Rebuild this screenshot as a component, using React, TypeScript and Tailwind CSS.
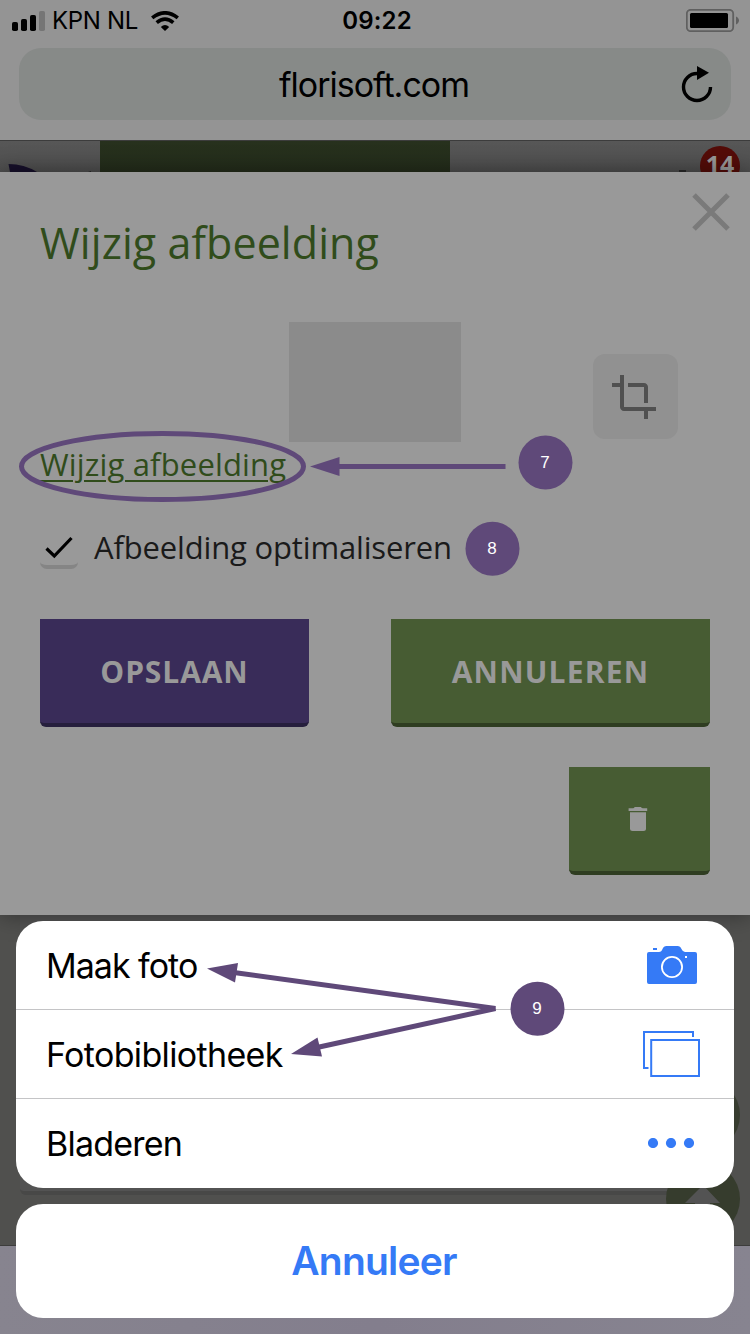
import React from "react";
import { MdCrop } from "react-icons/md";

function StatusBar() {
  return (
    <div className="grid h-[41px] grid-cols-3 items-center text-[24px] leading-[41px] text-black">
      <div className="flex items-center pl-[12px]">
        <svg width="34" height="20" viewBox="0 0 34 20" className="shrink-0">
          <rect x="0" y="11" width="6" height="9" rx="1.8" />
          <rect x="9" y="8" width="6" height="12" rx="1.8" />
          <rect x="18" y="4" width="6" height="16" rx="1.8" />
          <rect x="27" y="0" width="6" height="20" rx="1.8" fill="#757575" />
        </svg>
        <span className="ml-[6px] whitespace-nowrap tracking-[-0.3px]">KPN NL</span>
        <svg width="28" height="20" viewBox="0 0 28 20" className="ml-[13px] shrink-0">
          <path d="M1.2 6.9 Q14 -3.200 26.800 6.900" fill="none" stroke="#000" strokeWidth="3.7" />
          <path d="M5.700 11.600 Q14 4.800 22.300 11.600" fill="none" stroke="#000" strokeWidth="3.7" />
          <path d="M14 20 L9.800 15.900 Q14 12.200 18.200 15.900 Z" />
        </svg>
      </div>
      <span className="pl-[4px] text-center font-semibold tracking-[0.2px]">09:22</span>
      <div className="flex justify-end pr-[11px]">
        <svg width="53" height="23" viewBox="0 0 53 23">
          <rect x="0.8" y="0.8" width="46.4" height="21.4" rx="4" fill="none" stroke="#606060" strokeWidth="1.8" />
          <rect x="4" y="4" width="38" height="15" rx="1.5" />
          <path d="M50 7.5 C54 9.5 54 13.5 50 15.5 Z" fill="#606060" />
        </svg>
      </div>
    </div>
  );
}

function AddressBar() {
  return (
    <div className="mx-[19px] mt-[7px] grid h-[72px] grid-cols-[60px_1fr_60px] items-center rounded-[22px] bg-[#878a88]">
      <span />
      <span className="pr-[2px] text-center text-[34px] tracking-[-1px] text-black">florisoft.com</span>
      <svg width="34" height="38" viewBox="0 0 34 38" className="ml-[10px] mt-[2px]">
        <path d="M29.5 21 A13.5 13.5 0 1 1 16 7.5" fill="none" stroke="#000" strokeWidth="3.4" />
        <path d="M16 0 L28 6.7 L16 14 Z" />
      </svg>
    </div>
  );
}

function Background() {
  return (
    <div className="flex h-full flex-col">
      <header className="h-[140px] shrink-0 bg-[#949494]">
        <StatusBar />
        <AddressBar />
      </header>
      <div className="flex h-[32px] shrink-0 justify-between border-t border-[#3c3c3c] bg-gradient-to-b from-[#575757] to-[#4f4f4f]">
        <svg width="100" height="31" viewBox="0 0 100 31">
          <path d="M8.500 23 Q24 23 37 31 H10 Z" fill="#17102b" />
          <path d="M88 31 l3 -1 v1 Z" fill="#222" />
        </svg>
        <div className="w-[350px] bg-gradient-to-b from-[#27311d] to-[#242d1b]" />
        <div className="flex w-[300px] justify-end overflow-hidden pr-[10px] pt-[5px]">
          <span className="mr-[14px] mt-[24px] h-[2px] w-[7px] bg-[#292929]" />
          <span className="h-[40px] w-[40px] shrink-0 rounded-full bg-[#540c08] text-center font-['Open_Sans',sans-serif] text-[25px] font-bold leading-[36px] text-[#999]">
            14
          </span>
        </div>
      </div>
      <div className="flex flex-1 bg-[#50504e]">
        <div className="mx-[20px] mb-[50px] flex-1 rounded-[6px] border-b-4 border-[#484847] bg-[#535353]" />
      </div>
      <div className="h-[89px] shrink-0 border-t border-[#3d3d3c] bg-gradient-to-r from-[#87848f] via-[#837e8d] to-[#878490]" />
    </div>
  );
}

function FloatingButtons() {
  return (
    <div className="absolute left-[666px] top-[1078px] flex flex-col gap-[10px]">
      <div className="h-[74px] w-[74px] rounded-full bg-[#383d30]" />
      <div className="h-[74px] w-[74px] rounded-full bg-[#363c2d]">
        <svg width="74" height="74" viewBox="0 0 74 74">
          <path d="M19 41 L37 23 L54 41 H44 V54 H29 V41 Z" fill="#535353" />
        </svg>
      </div>
    </div>
  );
}

function ImageDialog() {
  return (
    <section className="absolute left-0 top-[172px] flex h-[743px] w-[750px] flex-col bg-[#999999] px-[40px] font-['Open_Sans',sans-serif] shadow-[0_0_22px_rgba(0,0,0,0.4)]">
      <div className="flex h-[150px] justify-between">
        <h1 className="mt-[42px] whitespace-nowrap text-[43px] leading-[58px] tracking-[0.08px] text-[#304c1b]">
          Wijzig afbeelding
        </h1>
        <svg width="38" height="38" viewBox="0 0 38 38" className="-mr-[20px] mt-[21px]">
          <path d="M2 2 L36 36 M36 2 L2 36" stroke="#7a7a7a" strokeWidth="5" />
        </svg>
      </div>
      <div className="flex h-[120px] pl-[249px]">
        <div className="h-[120px] w-[172px] bg-[#8b8b8b]" />
        <button className="ml-[132px] mt-[32px] flex h-[85px] w-[85px] items-center justify-center rounded-[12px] bg-[#919191]">
          <MdCrop size={48} color="#505050" className="-ml-[3px] mt-[1px]" />
        </button>
      </div>
      <a className="mt-[2px] h-[40px] whitespace-nowrap text-[31px] leading-[40px] tracking-[0.17px] text-[#304c1b] underline decoration-2 underline-offset-[4px]">
        Wijzig afbeelding
      </a>
      <label className="mt-[43px] flex h-[42px] items-center">
        <span className="flex h-[42px] w-[38px] justify-center rounded-b-[7px] border-b-4 border-[#858585]">
          <svg width="30" height="26" viewBox="0 0 30 26" className="mt-[8px]">
            <path d="M2.5 13.5 L10.3 21 L27.5 3" fill="none" stroke="#000" strokeWidth="3.2" />
          </svg>
        </span>
        <span className="-mt-[3px] ml-[16px] whitespace-nowrap text-[31px] leading-[42px] tracking-[-0.16px] text-[#1a1a1a]">
          Afbeelding optimaliseren
        </span>
      </label>
      <div className="mt-[50px] flex justify-between text-[30px] font-bold text-[#999]">
        <button className="h-[108px] w-[269px] rounded-b-[6px] border-b-4 border-[#261f3d] bg-[#392c59] tracking-[0.9px]">
          OPSLAAN
        </button>
        <button className="h-[108px] w-[319px] rounded-b-[6px] border-b-4 border-[#2f3d21] bg-[#475c33] tracking-[1.2px]">
          ANNULEREN
        </button>
      </div>
      <div className="mt-[40px] flex justify-end">
        <button className="flex h-[108px] w-[141px] items-center justify-center rounded-b-[6px] border-b-4 border-[#2f3d21] bg-[#475c33]">
          <svg width="20" height="24" viewBox="0 0 20 24" fill="#999" className="-ml-[3px]">
            <path d="M0.6 1.2 H5 Q6.3 1.2 6.6 0 H13 Q13.5 1.2 15 1.2 H19.2 V4 H0.6 Z" />
            <path d="M2 5.2 H18 V21.5 Q18 24 15.5 24 H4.5 Q2 24 2 21.5 Z" />
          </svg>
        </button>
      </div>
    </section>
  );
}

function CameraIcon() {
  return (
    <svg width="50" height="38" viewBox="0 0 50 38">
      <path
        d="M2 6 H12 Q14.5 6 15.5 3 Q16.6 0 19.5 0 H30.5 Q33.4 0 34.5 3 Q35.8 6 38 6 H48 Q50 6 50 8 V36 Q50 38 48 38 H2 Q0 38 0 36 V8 Q0 6 2 6 Z"
        fill="#357af6"
      />
      <rect x="6" y="2" width="4" height="2" fill="#357af6" />
      <circle cx="25" cy="21" r="10.1" fill="none" stroke="#fff" strokeWidth="1.8" />
      <rect x="38" y="10" width="2" height="2" fill="#fff" />
    </svg>
  );
}

function LibraryIcon() {
  return (
    <svg width="57" height="46" viewBox="0 0 57 46" fill="none" stroke="#357af6" strokeWidth="2">
      <path d="M50 6 V1 H1 V37 H5.5" />
      <rect x="8.2" y="9" width="47.8" height="36" />
    </svg>
  );
}

function MoreIcon() {
  return (
    <svg width="46" height="10" viewBox="0 0 46 10" fill="#357af6" className="-mt-[2px]">
      <circle cx="5" cy="5" r="5.1" />
      <circle cx="23" cy="5" r="5.1" />
      <circle cx="41" cy="5" r="5.1" />
    </svg>
  );
}

function ActionSheet() {
  return (
    <div className="absolute left-[16px] top-[921px] flex w-[718px] flex-col gap-[16px]">
      <div className="flex h-[267px] flex-col overflow-hidden rounded-[27px] bg-white text-[34px] text-black">
        <div className="flex h-[89px] items-center justify-between border-b border-[#c4c4c6] pl-[30px] pr-[37px]">
          <span className="tracking-[-1px]">Maak foto</span>
          <CameraIcon />
        </div>
        <div className="flex h-[89px] items-center justify-between border-b border-[#c4c4c6] pl-[30px] pr-[34px]">
          <span className="tracking-[-0.65px]">Fotobibliotheek</span>
          <LibraryIcon />
        </div>
        <div className="flex h-[89px] items-center justify-between pl-[30px] pr-[40px]">
          <span className="-mt-[1px] tracking-[-0.8px]">Bladeren</span>
          <MoreIcon />
        </div>
      </div>
      <button className="h-[114px] rounded-[27px] bg-white pr-[2px] text-[39px] font-semibold tracking-[-0.8px] text-[#357af6]">
        Annuleer
      </button>
    </div>
  );
}

function Annotations() {
  return (
    <svg
      className="absolute left-0 top-0"
      width="750"
      height="1334"
      viewBox="0 0 750 1334"
      fill="#5f4979"
      fontFamily="Liberation Sans, sans-serif"
      fontSize="17"
    >
      <g fill="none" stroke="#5f4979" strokeWidth="5">
        <ellipse cx="162.5" cy="466.5" rx="141" ry="33" />
        <path d="M336 466.5 H505.5" />
        <path d="M232 972.3 L495.5 1008.5" />
        <path d="M317 1047.5 L495.5 1008.5" />
      </g>
      <path d="M310 466.5 L339.500 457 V476 Z" />
      <path d="M207 968.5 L238 963 L235 982.5 Z" />
      <path d="M291 1054 L317.5 1037.5 L322 1056.5 Z" />
      <circle cx="545.5" cy="462.5" r="27" />
      <circle cx="492.5" cy="548.7" r="27" />
      <circle cx="537.5" cy="1008.7" r="27" />
      <g fill="#fff" textAnchor="middle">
        <text x="545" y="468">7</text>
        <text x="492" y="554">8</text>
        <text x="537" y="1014">9</text>
      </g>
    </svg>
  );
}

export default function App() {
  return (
    <main className="relative h-[1334px] w-[750px] overflow-hidden bg-[#50504e] font-['Inter',sans-serif]">
      <Background />
      <FloatingButtons />
      <ImageDialog />
      <ActionSheet />
      <Annotations />
    </main>
  );
}
